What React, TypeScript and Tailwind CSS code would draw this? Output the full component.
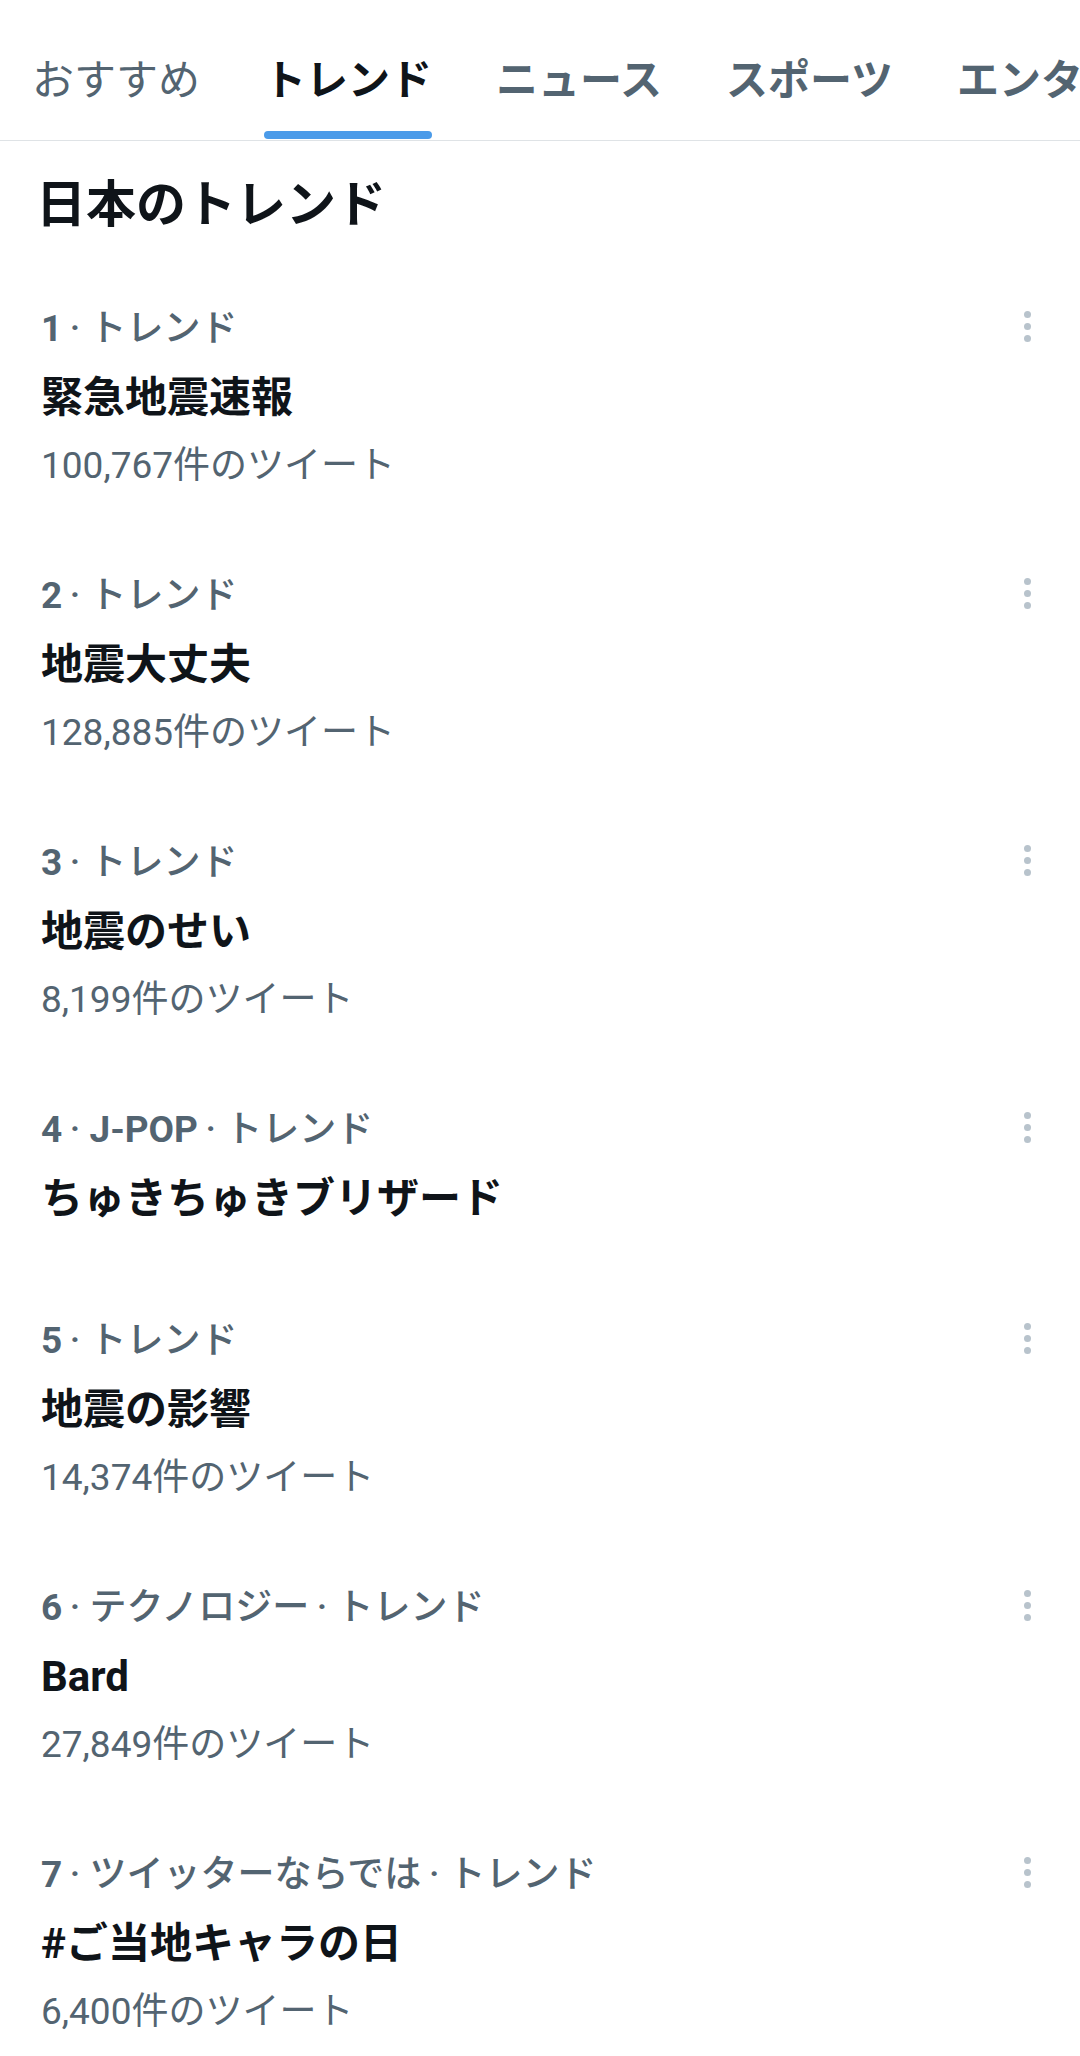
import React from "react";

type Item = { n: number; cat?: string; title: string; count?: string };

const items: Item[] = [
  { n: 1, title: "緊急地震速報", count: "100,767件のツイート" },
  { n: 2, title: "地震大丈夫", count: "128,885件のツイート" },
  { n: 3, title: "地震のせい", count: "8,199件のツイート" },
  { n: 4, cat: "J-POP", title: "ちゅきちゅきブリザード" },
  { n: 5, title: "地震の影響", count: "14,374件のツイート" },
  { n: 6, cat: "テクノロジー", title: "Bard", count: "27,849件のツイート" },
  { n: 7, cat: "ツイッターならでは", title: "#ご当地キャラの日", count: "6,400件のツイート" },
];

const tabs = [
  { label: "おすすめ", active: false, weight: "font-normal" },
  { label: "トレンド", active: true, weight: "font-bold" },
  { label: "ニュース", active: false, weight: "font-bold" },
  { label: "スポーツ", active: false, weight: "font-bold" },
  { label: "エンタメ", active: false, weight: "font-bold" },
];

function isLatin(s: string) {
  return /^[A-Za-z0-9\-]+$/.test(s);
}

function Meta({ n, cat }: { n: number; cat?: string }) {
  const parts: string[] = [String(n)];
  if (cat) parts.push(cat);
  parts.push("トレンド");
  return (
    <div className="text-[37px] leading-[44px] text-[#536471] whitespace-nowrap">
      {parts.map((p, i) => (
        <React.Fragment key={i}>
          {i > 0 && <span className="font-medium">{"\u2009·\u00a0"}</span>}
          <span className={isLatin(p) ? "font-bold" : "font-medium"}>{p}</span>
        </React.Fragment>
      ))}
    </div>
  );
}

function Dots() {
  return (
    <div className="flex flex-col items-center gap-[5px] mt-[4px]">
      <span className="block w-[7px] h-[7px] rounded-full bg-[#b8c3cc]" />
      <span className="block w-[7px] h-[7px] rounded-full bg-[#b8c3cc]" />
      <span className="block w-[7px] h-[7px] rounded-full bg-[#b8c3cc]" />
    </div>
  );
}

export default function App() {
  return (
    <div className="w-[1080px] h-[2056px] overflow-hidden bg-white font-[Roboto,'Noto_Sans_CJK_JP',sans-serif]">
      <div className="h-[141px] border-b border-[#dfe3e6] flex items-end pl-[32px] gap-[64px] overflow-hidden whitespace-nowrap">
        {tabs.map((t) => (
          <div key={t.label} className="flex flex-col shrink-0">
            <div
              className={`text-[42px] leading-[60px] ${t.weight} ${
                t.active ? "text-[#0f1419]" : "text-[#536471]"
              }`}
            >
              {t.label}
            </div>
            <div
              className={`mt-[20px] mb-[1px] h-[8px] rounded-full ${
                t.active ? "bg-[#4b9be9]" : "bg-transparent"
              }`}
            />
          </div>
        ))}
      </div>

      <h2 className="pl-[36px] pt-[34px] pb-[29px] text-[50px] leading-[60px] font-bold text-[#0f1419]">
        日本のトレンド
      </h2>

      <div className="flex flex-col">
        {items.map((it) => (
          <div
            key={it.n}
            className={`flex pl-[41px] pr-[49px] pt-[43px] ${it.count ? "pb-[43px]" : "pb-[49px]"}`}
          >
            <div className="flex-1 flex flex-col">
              <Meta n={it.n} cat={it.cat} />
              <div className="mt-[19px] text-[42px] leading-[56px] font-bold text-[#0f1419]">
                {it.title}
              </div>
              {it.count && (
                <div className="mt-[18px] text-[37px] leading-[44px] text-[#536471]">
                  {it.count}
                </div>
              )}
            </div>
            <Dots />
          </div>
        ))}
      </div>
    </div>
  );
}
